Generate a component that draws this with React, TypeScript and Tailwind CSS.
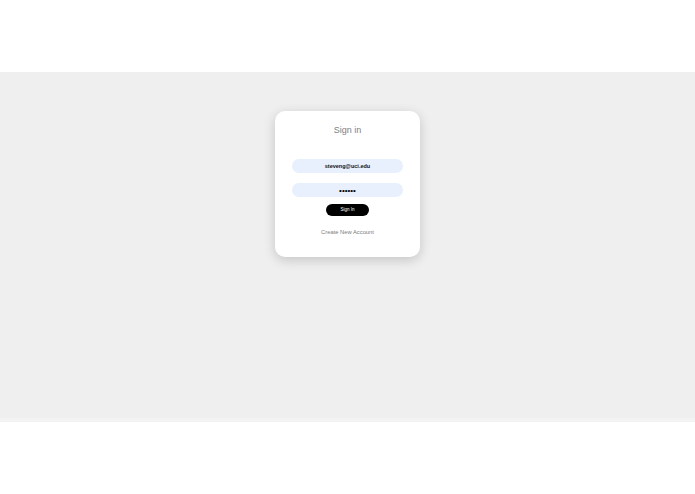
export default function App() {
  return (
    <div className="w-full min-h-[494px] bg-white font-['Liberation_Sans',Arial,sans-serif]">
      <div className="h-[72px]" />
      <main className="h-[346px] bg-[#efefef] flex justify-center pt-[39px]">
        <div className="w-[145px] h-[146px] bg-white rounded-[10px] shadow-[0_3px_12px_rgba(0,0,0,0.18)] flex flex-col items-center">
          <h1 className="mt-[14px] text-[9px] leading-[11px] text-[#808080]">Sign in</h1>
          <form className="mt-[23px] flex flex-col items-center">
            <input
              type="email"
              defaultValue="steveng@uci.edu"
              className="w-[111px] h-[14px] rounded-full bg-[#e8f0fe] text-center text-[5.5px] font-bold text-[#111] outline-none"
            />
            <input
              type="password"
              defaultValue="123456"
              className="mt-[10px] w-[111px] h-[14px] rounded-full bg-[#e8f0fe] text-center text-[8px] text-black outline-none"
            />
            <button
              type="button"
              className="mt-[7px] w-[43px] h-[12px] rounded-full bg-black text-white text-[4.5px] leading-none"
            >
              Sign In
            </button>
          </form>
          <a href="#" className="mt-[12px] text-[5.8px] leading-[8px] text-[#7c7c7c]">
            Create New Account
          </a>
        </div>
      </main>
      <div className="h-[4px] bg-[#f3f3f3]" />
    </div>
  );
}
